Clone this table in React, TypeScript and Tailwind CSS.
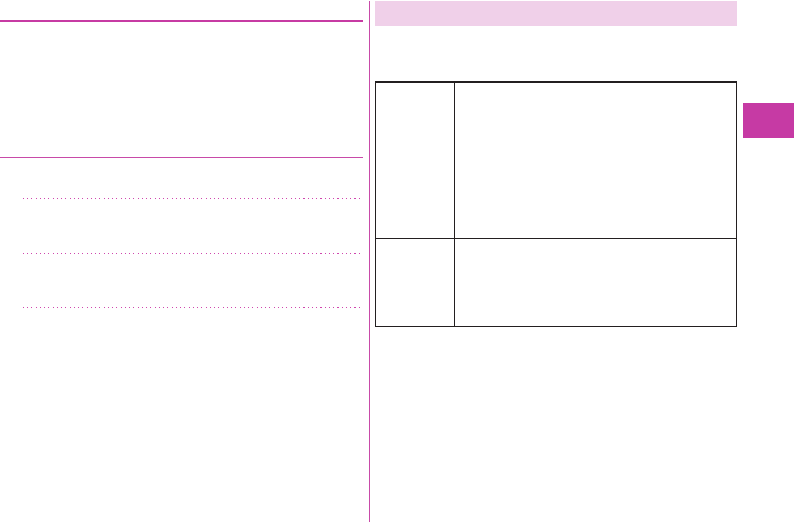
export default function App() {
  return (
    <div className="flex h-[522px] w-[794px] overflow-hidden bg-white font-['Liberation_Sans',sans-serif]">
      {/* Left column */}
      <div className="w-[363px] shrink-0 pt-[20px]">
        <div className="h-[2px] bg-[#c73ba3]" />
        <div className="mt-[135px] h-px bg-[#c84aa8]" />
        <div className="ml-[23px] mt-[40px] flex flex-col gap-[53.5px]">
          <div className="h-px bg-[repeating-linear-gradient(to_right,#d046ae_0_1px,transparent_1px_4.25px)]" />
          <div className="h-px bg-[repeating-linear-gradient(to_right,#d046ae_0_1px,transparent_1px_4.25px)]" />
          <div className="h-px bg-[repeating-linear-gradient(to_right,#d046ae_0_1px,transparent_1px_4.25px)]" />
        </div>
      </div>

      {/* Divider */}
      <div className="ml-[6px] mt-px w-px shrink-0 bg-[#c84aa8]" />

      {/* Right column */}
      <div className="ml-[5px] w-[362px] shrink-0 pt-px">
        <div className="h-[25px] bg-[#f0d0e9]" />
        <div className="mt-[55px] border border-t-2 border-[#231f20]">
          <div className="flex h-[156px] border-b border-[#231f20]">
            <div className="w-[79px] border-r border-[#231f20]" />
            <div className="flex-1" />
          </div>
          <div className="flex h-[87px]">
            <div className="w-[79px] border-r border-[#231f20]" />
            <div className="flex-1" />
          </div>
        </div>
      </div>

      {/* Thumb tab */}
      <div className="ml-[6px] mt-[103px] h-[35px] w-[51px] shrink-0 bg-[#c63aa4]" />
    </div>
  )
}
